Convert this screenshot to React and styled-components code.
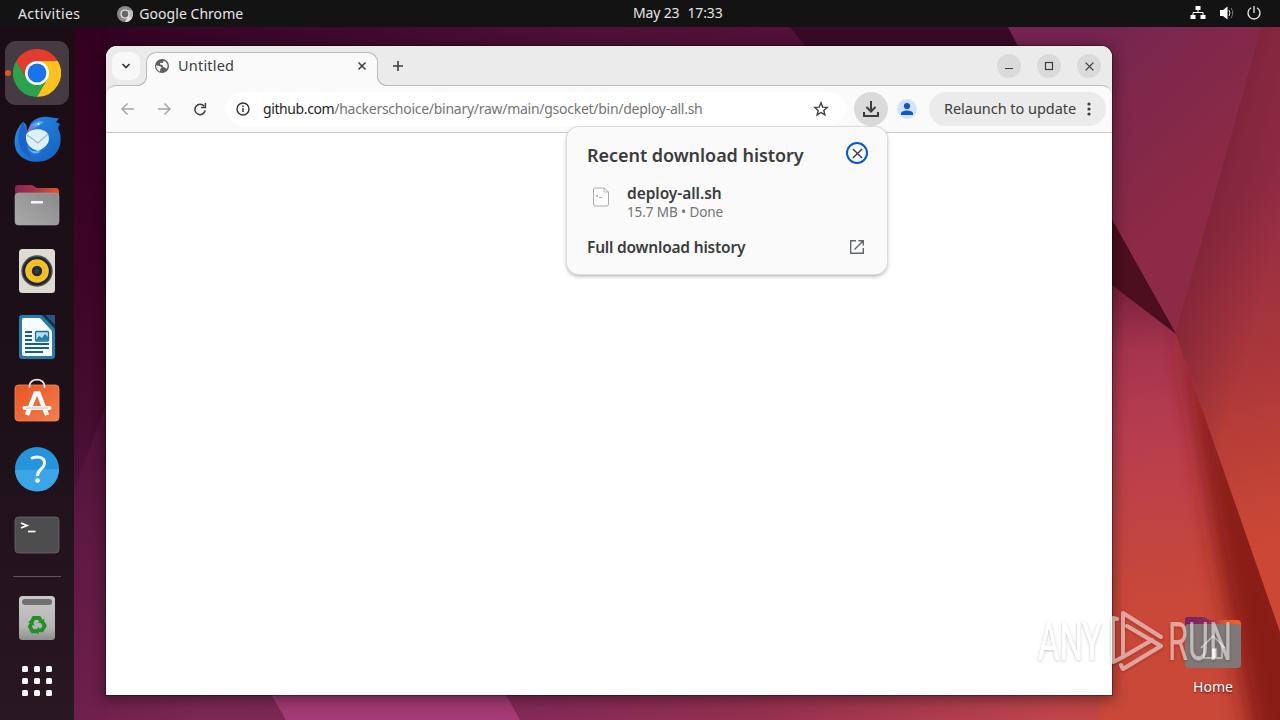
import React from 'react'
import styled, { createGlobalStyle } from 'styled-components'

const GlobalStyle = createGlobalStyle`
  * {
    box-sizing: border-box;
  }
  body {
    margin: 0;
    overflow: hidden;
    font-family: 'Noto Sans', 'Open Sans', sans-serif;
  }
  svg {
    display: block;
    flex: none;
  }
`

const Screen = styled.div`
  position: relative;
  display: flex;
  flex-direction: column;
  width: 1280px;
  height: 720px;
  overflow: hidden;
  background: #33001f;
`

const WallpaperLayer = styled.div`
  position: absolute;
  inset: 0;
`

const Label = styled.span`
  padding-bottom: ${props => props.$lift || 0}px;
  font-size: ${props => props.$size || 14}px;
  font-weight: ${props => props.$weight || 400};
  letter-spacing: ${props => props.$spacing || 0}px;
  color: ${props => props.$color || '#3c3c3c'};
  white-space: nowrap;
`

const TopBar = styled.header`
  position: relative;
  display: flex;
  align-items: center;
  height: 27px;
  padding: 0 18px;
  background: #131313;
`

const AppMenu = styled.div`
  display: flex;
  align-items: center;
  width: 615px;
`

const ChromeMenu = styled.div`
  display: flex;
  align-items: center;
  gap: 6px;
  margin-left: 37px;
`

const Clock = styled.div`
  display: flex;
  gap: 8px;
`

const StatusArea = styled.div`
  display: flex;
  align-items: center;
  gap: 12px;
  margin-left: auto;
`

const Workspace = styled.div`
  position: relative;
  display: flex;
  flex: 1;
`

const Dock = styled.nav`
  display: flex;
  flex-direction: column;
  align-items: center;
  width: 74px;
  padding-top: 14px;
  background: linear-gradient(#1a0d15, #1d1018 55%, #291722);
`

const DockSlot = styled.div`
  position: relative;
  display: flex;
  flex: none;
  align-items: center;
  justify-content: center;
  width: 64px;
  height: 64px;
  margin-bottom: 2px;
  border-radius: 11px;
  background: ${props => props.$active ? '#463b42' : 'transparent'};
`

const RunningDot = styled.i`
  position: absolute;
  left: 0;
  top: 29px;
  width: 6px;
  height: 6px;
  border-radius: 50%;
  background: #e95420;
`

const DockSeparator = styled.div`
  flex: none;
  width: 48px;
  height: 1px;
  margin: 7px 0 9px;
  background: #5f555b;
`

const AppGrid = styled.div`
  display: grid;
  grid-template-columns: repeat(3, 6px);
  grid-auto-rows: 6px;
  gap: 6px;
  margin-top: -7px;

  i {
    border-radius: 1.5px;
    background: #fff;
  }
`

const BrowserWindow = styled.section`
  position: absolute;
  left: 106px;
  top: 19px;
  display: flex;
  flex-direction: column;
  width: 1006px;
  height: 649px;
  border-radius: 11px 11px 0 0;
  background: #fff;
  box-shadow: 0 0 0 1px rgba(0, 0, 0, 0.3), 0 3px 14px 2px rgba(0, 0, 0, 0.4);
`

const TabStrip = styled.div`
  display: flex;
  align-items: flex-start;
  height: 49px;
  margin-bottom: -10px;
  padding: 6px 11px 0 6px;
  border-radius: 11px 11px 0 0;
  background: #ebebeb;
`

const TabSearch = styled.div`
  display: flex;
  align-items: center;
  justify-content: center;
  width: 28px;
  height: 28px;
  border-radius: 9px;
  background: #f8f8f8;
`

const Tab = styled.div`
  position: relative;
  z-index: 1;
  display: flex;
  align-items: center;
  width: 232px;
  height: 34px;
  margin-left: 6px;
  padding: 0 10px 7px 8px;
  border: 1px solid #b9b9b9;
  border-bottom: 0;
  border-radius: 10px 10px 0 0;
  background: #fafafa;

  &::before,
  &::after {
    content: '';
    position: absolute;
    bottom: 0;
    width: 10px;
    height: 10px;
  }
  &::before {
    left: -10px;
    background: radial-gradient(circle at 0 0, transparent 8.7px, #b9b9b9 9.2px 9.8px, #fafafa 10.3px);
  }
  &::after {
    right: -10px;
    background: radial-gradient(circle at 100% 0, transparent 8.7px, #b9b9b9 9.2px 9.8px, #fafafa 10.3px);
  }
`

const TabTitle = styled(Label)`
  flex: 1;
  margin-left: 9px;
`

const NewTab = styled.div`
  margin: 8px 0 0 14px;
`

const WindowControls = styled.div`
  display: flex;
  gap: 16px;
  margin: 2px 0 0 auto;
`

const WindowButton = styled.div`
  display: flex;
  align-items: center;
  justify-content: center;
  width: 24px;
  height: 24px;
  border-radius: 50%;
  background: #dadada;
`

const Toolbar = styled.div`
  display: flex;
  align-items: center;
  height: 48px;
  padding: 0 6px 0 14px;
  border-top: 1px solid #bcbcbc;
  border-bottom: 1px solid #c8c8c8;
  border-radius: 10px 10px 0 0;
  background: #fafafa;
`

const NavButtons = styled.div`
  display: flex;
  gap: 20px;
`

const AddressField = styled.div`
  display: flex;
  align-items: center;
  width: 620px;
  height: 34px;
  margin-left: 18px;
  padding: 0 17px 0 9px;
  border-radius: 17px;
  background: #fff;
`

const Address = styled(Label)`
  flex: 1;
  margin-left: 12px;

  b {
    font-weight: 400;
    letter-spacing: -0.4px;
    color: #1f1f1f;
  }
`

const DownloadButton = styled.div`
  display: flex;
  align-items: center;
  justify-content: center;
  width: 34px;
  height: 34px;
  margin-left: 8px;
  border-radius: 50%;
  background: #dadada;
`

const Profile = styled.div`
  display: flex;
  align-items: center;
  justify-content: center;
  width: 20px;
  height: 20px;
  margin-left: 9px;
  border-radius: 50%;
  background: #d3e3fd;
`

const RelaunchButton = styled.div`
  display: flex;
  align-items: center;
  justify-content: space-between;
  width: 177px;
  height: 34px;
  margin-left: auto;
  padding: 0 15px;
  border-radius: 17px;
  background: #ebebeb;
`

const DownloadBubble = styled.aside`
  position: absolute;
  left: 461px;
  top: 81px;
  width: 320px;
  height: 147px;
  padding: 13px 19px 0 20px;
  border-radius: 12px;
  background: #fafafa;
  box-shadow: 0 0 0 1px #dcdcdc, 0 2px 4px rgba(0, 0, 0, 0.35);
`

const BubbleRow = styled.div`
  display: flex;
  align-items: center;
  justify-content: space-between;
  height: ${props => props.$height}px;
  padding-right: ${props => props.$inset || 0}px;
`

const BubbleTitle = styled(Label)`
  padding-top: 3px;
`

const FileRow = styled.div`
  display: flex;
  align-items: flex-start;
  height: 58px;
  padding: 21px 0 0 4px;
`

const FileText = styled.div`
  display: flex;
  flex-direction: column;
  margin: -3px 0 0 16px;
  line-height: 19px;
`

const FocusRing = styled.div`
  display: flex;
  align-items: center;
  justify-content: center;
  width: 22px;
  height: 22px;
  border: 2px solid #0b57d0;
  border-radius: 50%;
`

const HomeShortcut = styled.div`
  position: absolute;
  left: 1173px;
  top: 588px;
  display: flex;
  flex-direction: column;
  align-items: center;
  gap: 8px;
  width: 80px;
  line-height: 20px;
  text-shadow: 0 1px 2px rgba(0, 0, 0, 0.7);
`

const Watermark = styled.div`
  position: absolute;
  left: 1030px;
  top: 600px;
`

const Wallpaper = () =>
  <svg width="1280" height="720" viewBox="0 0 1280 720">
    <defs>
      <linearGradient id="topShade" x1="0" x2="1" y1="0" y2="0">
        <stop offset="0" stopColor="#2f001f" />
        <stop offset="0.2" stopColor="#3a0728" />
        <stop offset="0.45" stopColor="#4e1035" />
        <stop offset="0.75" stopColor="#561239" />
        <stop offset="1" stopColor="#4b1031" />
      </linearGradient>
      <linearGradient id="bottomShade" x1="0" x2="1" y1="0" y2="0">
        <stop offset="0" stopColor="#651a45" />
        <stop offset="0.16" stopColor="#7b2853" />
        <stop offset="0.4" stopColor="#812957" />
        <stop offset="0.6" stopColor="#96304f" />
        <stop offset="0.82" stopColor="#bd444c" />
        <stop offset="0.92" stopColor="#c94838" />
        <stop offset="1" stopColor="#c94838" />
      </linearGradient>
      <linearGradient id="leftShade" x1="0" x2="0" y1="0" y2="1">
        <stop offset="0" stopColor="#32001f" />
        <stop offset="0.35" stopColor="#3b0425" />
        <stop offset="0.58" stopColor="#450d2e" />
        <stop offset="0.75" stopColor="#5a1840" />
        <stop offset="1" stopColor="#72214f" />
      </linearGradient>
      <linearGradient id="violet" gradientUnits="userSpaceOnUse" x1="1060" y1="60" x2="1190" y2="200">
        <stop offset="0" stopColor="#75244f" />
        <stop offset="0.35" stopColor="#7d274c" />
        <stop offset="1" stopColor="#8d2a45" />
      </linearGradient>
      <linearGradient id="ember" gradientUnits="userSpaceOnUse" x1="1200" y1="200" x2="1290" y2="540">
        <stop offset="0" stopColor="#932c46" />
        <stop offset="0.45" stopColor="#a8363b" />
        <stop offset="1" stopColor="#cd4834" />
      </linearGradient>
      <linearGradient id="emberEdge" gradientUnits="userSpaceOnUse" x1="1219" y1="180" x2="1290" y2="200">
        <stop offset="0" stopColor="#752034" stopOpacity="0.6" />
        <stop offset="1" stopColor="#752034" stopOpacity="0" />
      </linearGradient>
      <linearGradient id="rose" gradientUnits="userSpaceOnUse" x1="1120" y1="290" x2="1150" y2="600">
        <stop offset="0" stopColor="#7b223c" />
        <stop offset="0.2" stopColor="#a6344e" />
        <stop offset="0.5" stopColor="#b83e4e" />
        <stop offset="1" stopColor="#c94838" />
      </linearGradient>
      <linearGradient id="magenta" x1="0" x2="0" y1="0" y2="1">
        <stop offset="0" stopColor="#8f3060" />
        <stop offset="1" stopColor="#a63a76" />
      </linearGradient>
      <clipPath id="roseFacet">
        <path d="M1100 290 1176 334 1280 632V720H1100Z" />
      </clipPath>
      <filter id="soften" x="-50%" y="-20%" width="200%" height="140%">
        <feGaussianBlur stdDeviation="11" />
      </filter>
    </defs>
    <rect width="1280" height="400" fill="url(#topShade)" />
    <rect y="360" width="1280" height="360" fill="url(#bottomShade)" />
    <rect width="108" height="720" fill="url(#leftShade)" />
    <path d="M74 490 106 405V720H74Z" fill="#6a1f49" opacity="0.3" />
    <path d="M790 27H1008L1030 70H825Z" fill="#390a24" />
    <path d="M240 640 286 720H520L430 560Z" fill="url(#magenta)" />
    <path d="M1008 27H1262L1176 334 1112 220Z" fill="url(#violet)" />
    <path d="M1262 27H1280V632L1176 334Z" fill="url(#ember)" />
    <path d="M1262 27H1280V632L1176 334Z" fill="url(#emberEdge)" />
    <path d="M1100 198 1176 334 1100 276Z" fill="#4d0e20" />
    <path d="M1100 276 1176 334 1280 632V720H1100Z" fill="url(#rose)" />
    <g clipPath="url(#roseFacet)">
      <path d="M1176 310 1330 700 1330 760 1256 760 1218 560Z" fill="#8a1f16" filter="url(#soften)" />
    </g>
  </svg>

const ChromeIcon = () =>
  <svg width="48" height="48" viewBox="0 0 48 48">
    <path d="M24 12H44.8A24 24 0 0 0 3.2 12L13.6 30Z" fill="#e33b2e" />
    <path d="M13.6 30 3.2 12A24 24 0 0 0 24 48L34.4 30Z" fill="#2ba24c" />
    <path d="M34.4 30 24 48A24 24 0 0 0 44.8 12H24Z" fill="#fcc31e" />
    <circle cx="24" cy="24" r="12" fill="#fff" />
    <circle cx="24" cy="24" r="9.4" fill="#1a73e8" />
  </svg>

const ThunderbirdIcon = () =>
  <svg width="48" height="48" viewBox="0 0 48 48">
    <defs>
      <linearGradient id="bird" x1="0" y1="0" x2="1" y2="1">
        <stop offset="0" stopColor="#2b8cec" />
        <stop offset="1" stopColor="#1460bd" />
      </linearGradient>
    </defs>
    <path d="M16 13C18 5 26 1 35 2L46 3.500 43 7 47 9 45 13C50 23 48 35 39 42 28 50 11 48 4 37-1 27 2 15 10 7 13 8 14 12 14 16Z" fill="url(#bird)" />
    <path d="M10 7C5 16 4 24 7 32 9 37 14 41 19 43 13 34 13 26 14 16Z" fill="#1c63c7" />
    <path d="M16 13C20 7 27 5 31 7 28 10 22 12 16 16Z" fill="#58a9f6" />
    <path d="M15 15C17 11 20 10 22 11L16 17Z" fill="#9c6bb8" />
    <circle cx="25.500" cy="9" r="1.100" fill="#fff" />
    <path d="M13 20C16 13 31 12 35 19 38 26 34 32 25 36 18 34 12 29 13 20Z" fill="#dff0fd" />
    <path d="M14 20 25 28 35 19" fill="none" stroke="#95bed7" strokeWidth="1.300" />
    <path d="M14 31C17 36 22 37 28 36 24 40 18 40 14 31Z" fill="#69aff0" />
  </svg>

const FilesIcon = () =>
  <svg width="46" height="42" viewBox="0 0 46 42">
    <defs>
      <linearGradient id="folderBack" x1="0" x2="1">
        <stop offset="0" stopColor="#842653" />
        <stop offset="0.45" stopColor="#a3354d" />
        <stop offset="1" stopColor="#e95420" />
      </linearGradient>
      <linearGradient id="folderFront" x1="1" x2="0" y1="0" y2="1">
        <stop offset="0" stopColor="#8a8a8a" />
        <stop offset="1" stopColor="#aaa" />
      </linearGradient>
    </defs>
    <path d="M1 4Q1 1 4 1H18L23 4H42Q45 4 45 8V20H1Z" fill="url(#folderBack)" />
    <rect x="1" y="9" width="44" height="32" rx="3.500" fill="url(#folderFront)" stroke="#a7a7a7" strokeWidth="0.600" />
    <rect x="17" y="17" width="12" height="2.600" rx="0.500" fill="#f7f7f7" />
  </svg>

const RhythmboxIcon = () =>
  <svg width="38" height="46" viewBox="0 0 38 46">
    <rect x="1" y="1" width="36" height="44" rx="3.500" fill="#dfdbd2" />
    <circle cx="19" cy="23" r="15.700" fill="#4c515c" />
    <circle cx="19" cy="23" r="14.300" fill="#22252c" />
    <circle cx="19" cy="23" r="11.800" fill="#f3c22b" />
    <circle cx="19" cy="23" r="8" fill="none" stroke="#e3b020" strokeWidth="0.800" />
    <circle cx="19" cy="23" r="5.200" fill="#262a33" />
    <circle cx="19" cy="23" r="2.200" fill="#33405a" />
  </svg>

const WriterIcon = () =>
  <svg width="38" height="46" viewBox="0 0 38 46">
    <path d="M4 1H25L37 13V42Q37 45 34 45H4Q1 45 1 42V4Q1 1 4 1Z" fill="#267ca9" />
    <path d="M27 1H37V11Z" fill="#205a86" />
    <path d="M6 4H22L34 17V42H6Q4 42 4 40V6Q4 4 6 4Z" fill="#f5fbff" />
    <path d="M24 1H27L37 11V15Z" fill="#123047" />
    <path d="M7 18H14M7 22H14M7 26H14M7 30H31M7 34H31M7 38H25" stroke="#176087" strokeWidth="1.800" />
    <rect x="17.500" y="17.500" width="13" height="9.500" rx="1" fill="#b3def5" stroke="#196d99" strokeWidth="1.300" />
    <path d="M18 26 21 22 24 24 27 20 30 23V26Z" fill="#237faf" />
  </svg>

const SoftwareIcon = () =>
  <svg width="46" height="50" viewBox="0 0 46 50">
    <defs>
      <linearGradient id="bag" x1="0" y1="0" x2="1" y2="1">
        <stop offset="0" stopColor="#e95420" />
        <stop offset="1" stopColor="#f27f51" />
      </linearGradient>
    </defs>
    <rect x="1" y="7" width="44" height="36" rx="3.500" fill="url(#bag)" stroke="#f48a60" strokeWidth="0.800" />
    <path d="M15.500 10V8C15.500-.5 30.500-.5 30.500 8V10" fill="none" stroke="#ece6e2" strokeWidth="1.700" />
    <path d="M13 37 21.500 15.500H24.500L33 37" fill="none" stroke="#fff" strokeWidth="4.500" />
    <path d="M10.500 30H35.500" stroke="#fff" strokeWidth="4" strokeLinecap="round" />
    <path d="M12 30H34" stroke="#eb967b" strokeWidth="0.800" />
  </svg>

const HelpIcon = () =>
  <svg width="46" height="46" viewBox="0 0 46 46">
    <circle cx="23" cy="23" r="22" fill="#2494dd" />
    <path d="M1 24A22 22 0 0 0 45 23Z" fill="#3ba5e7" />
    <path d="M17 12.500C23 9.500 31 11 30.500 17.500 30 23 23.500 23 23.500 30" fill="none" stroke="#fff" strokeWidth="3" />
    <circle cx="23.500" cy="34.500" r="2.300" fill="#fff" />
  </svg>

const TerminalIcon = () =>
  <svg width="46" height="38" viewBox="0 0 46 38">
    <rect x="1" y="1" width="44" height="36" rx="3.500" fill="#4d4d4d" stroke="#6b6b6b" strokeWidth="0.800" />
    <path d="M7 7 13 9.500 7 12" fill="none" stroke="#fff" strokeWidth="1.800" />
    <path d="M14 15.500H21.500" stroke="#fff" strokeWidth="1.700" />
  </svg>

const TrashIcon = () =>
  <svg width="38" height="46" viewBox="0 0 38 46">
    <defs>
      <linearGradient id="bin" x1="0" x2="0" y1="0" y2="1">
        <stop offset="0" stopColor="#c9c9c9" />
        <stop offset="0.7" stopColor="#b5b5b5" />
        <stop offset="1" stopColor="#8e8e8e" />
      </linearGradient>
    </defs>
    <rect x="1" y="1" width="36" height="44" rx="3.500" fill="url(#bin)" />
    <rect x="4" y="4" width="30" height="6" rx="3" fill="#707070" />
    <g transform="translate(19 30)">
      {[0, 120, 240].map(angle =>
        <g key={angle} transform={`rotate(${angle})`}>
          <path d="M-5.200-3.500-3.200-7H2.200L3.800-4.200" fill="none" stroke="#218f28" strokeWidth="3.800" />
          <path d="M.6-2.600 6.600-1.200 7.400-6.200Z" fill="#218f28" />
        </g>
      )}
    </g>
  </svg>

const dockApps = [
  { name: 'Google Chrome', icon: <ChromeIcon />, active: true },
  { name: 'Thunderbird', icon: <ThunderbirdIcon /> },
  { name: 'Files', icon: <FilesIcon /> },
  { name: 'Rhythmbox', icon: <RhythmboxIcon /> },
  { name: 'Writer', icon: <WriterIcon /> },
  { name: 'Software', icon: <SoftwareIcon /> },
  { name: 'Help', icon: <HelpIcon /> },
  { name: 'Terminal', icon: <TerminalIcon /> },
]

const MenuChromeIcon = () =>
  <svg width="16" height="16" viewBox="0 0 16 16">
    <circle cx="8" cy="8" r="8" fill="#888" />
    <path d="M8 4H15A8 8 0 0 1 8 16L11.500 10Z" fill="#bcbcbc" />
    <path d="M8 16 11.500 10 15 12A8 8 0 0 1 8 16Z" fill="#dedede" />
    <circle cx="8" cy="8" r="4" fill="#666" stroke="#eee" strokeWidth="1.200" />
  </svg>

const NetworkIcon = () =>
  <svg width="16" height="16" viewBox="0 0 16 16">
    <path d="M5.500 0H10.500V4H5.500ZM0.500 9H5.500V13H.5ZM10.500 9H15.500V13H10.500Z" fill="#fff" />
    <path d="M8 4V6.500M3 9V6.500H13V9" fill="none" stroke="#fff" />
  </svg>

const VolumeIcon = () =>
  <svg width="16" height="18" viewBox="0 0 16 18">
    <path d="M2 5H5L9.500 1.500V14.500L5 11H2Z" fill="#fff" />
    <path d="M11 5Q13 8 11 11" fill="none" stroke="#ddd" />
    <path d="M13 3Q16.500 8 13 13" fill="none" stroke="#777" />
  </svg>

const PowerIcon = () =>
  <svg width="16" height="18" viewBox="0 0 16 18">
    <path d="M5 2.800A6 6 0 1 0 11 2.800M8 1V8" fill="none" stroke="#ececec" strokeWidth="1.300" />
  </svg>

const GlobeIcon = () =>
  <svg width="14" height="14" viewBox="0 0 14 14">
    <circle cx="7" cy="7" r="7" fill="#5a5d61" />
    <path d="M1.300 6.300 5 7.200C5.800 7.500 6.800 8 6.500 9L5.200 10V12.500C2.600 12 .9 9.500 1.300 6.300ZM8.500 1.700C11 2.300 12.600 4.500 12.600 7 12.500 8 12.300 9 11.600 10L10 8.500 8 8 7.500 6 5 5.500V4L8 3.800Z" fill="#f3f3f3" />
  </svg>

const CloseGlyph = ({ size = 10, width = 1.5, color = '#3c3c3c' }) =>
  <svg width={size} height={size} viewBox="0 0 10 10">
    <path d="M1.500 1.500 8.500 8.500M8.500 1.500 1.500 8.500" stroke={color} strokeWidth={width} />
  </svg>

const ArrowIcon = ({ flip }) =>
  <svg width="16" height="16" viewBox="0 0 16 16">
    <path d={flip ? 'M2 8H13.500M8.500 2.500 14 8 8.500 13.500' : 'M14 8H2.500M7.500 2.500 2 8 7.500 13.500'} fill="none" stroke="#a5a7a9" strokeWidth="1.500" />
  </svg>

const ReloadIcon = () =>
  <svg width="16" height="16" viewBox="0 0 16 16">
    <path d="M12.200 5.200A5.200 5.200 0 1 0 13.200 9.300" fill="none" stroke="#3f4144" strokeWidth="1.600" />
    <path d="M13.400 2V6.500H9" fill="none" stroke="#3f4144" strokeWidth="1.500" />
  </svg>

const InfoIcon = () =>
  <svg width="16" height="16" viewBox="0 0 16 16">
    <circle cx="8" cy="8" r="6" fill="none" stroke="#303134" strokeWidth="1.400" />
    <path d="M8 7.300V11M8 4.600V6.100" stroke="#303134" strokeWidth="1.500" />
  </svg>

const StarIcon = () =>
  <svg width="16" height="16" viewBox="0 0 16 16">
    <path d="M8 1.800 9.700 6.100 14.300 6.400 10.800 9.400 11.900 13.900 8 11.500 4.100 13.900 5.200 9.400 1.700 6.400 6.300 6.100Z" fill="none" stroke="#3f4144" strokeWidth="1.400" />
  </svg>

const DownloadIcon = () =>
  <svg width="18" height="18" viewBox="0 0 18 18">
    <path d="M9 1V11M4.500 7 9 11.500 13.500 7M2 12V16H16V12" fill="none" stroke="#3c3c3c" strokeWidth="2" />
  </svg>

const PersonIcon = () =>
  <svg width="14" height="14" viewBox="0 0 14 14">
    <circle cx="7" cy="4" r="3.100" fill="#0b57d0" />
    <path d="M1 13V11Q2 8.500 7 8.500T13 11V13Z" fill="#0b57d0" />
  </svg>

const ScriptFileIcon = () =>
  <svg width="20" height="20" viewBox="0 0 20 20">
    <path d="M2.500 2Q2.500 1 4 1H13L17.500 5V17Q17.500 19 16 19H4Q2.500 19 2.500 17Z" fill="#fcfcfc" stroke="#aaa" />
    <path d="M13 1V5H17.500" fill="none" stroke="#aaa" strokeWidth="0.800" />
    <path d="M5 8 7 9 5 10M8 10.500H11" fill="none" stroke="#a5a5a5" strokeWidth="0.900" />
  </svg>

const LaunchIcon = () =>
  <svg width="16" height="16" viewBox="0 0 16 16">
    <path d="M7 1.700H1.700V14.300H14.300V9M9.500 1.700H14.300V6.500M14 2 5.500 10.500" fill="none" stroke="#62666a" strokeWidth="1.400" />
  </svg>

const HomeFolderIcon = () =>
  <svg width="58" height="54" viewBox="0 0 58 54">
    <defs>
      <linearGradient id="homeBack" x1="0" x2="1">
        <stop offset="0" stopColor="#752268" />
        <stop offset="0.4" stopColor="#8e2b58" />
        <stop offset="0.7" stopColor="#df5330" />
        <stop offset="1" stopColor="#ef6428" />
      </linearGradient>
    </defs>
    <path d="M1 5Q1 2 4 2H20L26 5H53Q57 5 57 9V20H1Z" fill="url(#homeBack)" />
    <rect x="1" y="9" width="56" height="44" rx="4" fill="#7f7876" />
    <path d="M17 33 29 21 41 33M20 31V43H38V31M29 34H32V43H29Z" fill="none" stroke="#ccc" strokeWidth="1.400" />
    <rect x="28" y="34" width="4" height="9" fill="#eee" />
  </svg>

const AnyRunMark = () =>
  <svg width="250" height="80" viewBox="0 0 250 80">
    <defs>
      <filter id="markShadow" x="-10%" y="-10%" width="120%" height="130%">
        <feDropShadow dx="0" dy="1" stdDeviation="1.800" floodColor="#000" floodOpacity="0.5" />
      </filter>
    </defs>
    <g filter="url(#markShadow)" fill="#fff" opacity="0.5" fontFamily="Roboto, sans-serif" fontSize="53">
      <text x="8" y="60" textLength="64" lengthAdjust="spacingAndGlyphs">ANY</text>
      <text x="138" y="60" textLength="64" lengthAdjust="spacingAndGlyphs">RUN</text>
      <g fill="none" stroke="#fff" strokeWidth="4" strokeLinecap="round" strokeLinejoin="round">
        <path d="M131 37 93 13V57L122 40" />
        <path d="M97 26 131 46 93 69 91 65" />
        <path d="M87 19 83 18V62L93 57" />
      </g>
    </g>
  </svg>

const MinimizeGlyph = () =>
  <svg width="10" height="10" viewBox="0 0 10 10">
    <path d="M1 7.500H9" stroke="#3c3c3c" />
  </svg>

const MaximizeGlyph = () =>
  <svg width="10" height="10" viewBox="0 0 10 10">
    <rect x="1.500" y="1.500" width="7" height="7" fill="none" stroke="#3c3c3c" strokeWidth="1.200" />
  </svg>

const ChevronGlyph = () =>
  <svg width="10" height="8" viewBox="0 0 10 8">
    <path d="M1.500 2 5 5.500 8.500 2" fill="none" stroke="#333" strokeWidth="1.700" />
  </svg>

const PlusGlyph = () =>
  <svg width="12" height="12" viewBox="0 0 12 12">
    <path d="M6 1V11M1 6H11" stroke="#3c3c3c" strokeWidth="1.600" />
  </svg>

const DotsGlyph = () =>
  <svg width="4" height="16" viewBox="0 0 4 16">
    <g fill="#3c3c3c">
      <circle cx="2" cy="3" r="1.600" />
      <circle cx="2" cy="8" r="1.600" />
      <circle cx="2" cy="13" r="1.600" />
    </g>
  </svg>

const Downloads = () =>
  <DownloadBubble>
    <BubbleRow $height={26}>
      <BubbleTitle $size={18} $weight={600} $spacing={-0.05}>Recent download history</BubbleTitle>
      <FocusRing><CloseGlyph size={13} width={1.1} /></FocusRing>
    </BubbleRow>
    <FileRow>
      <ScriptFileIcon />
      <FileText>
        <Label $size={15.5} $weight={600} $spacing={-0.05}>deploy-all.sh</Label>
        <Label $size={13.5} $spacing={-0.1} $color="#747474">15.7 MB • Done</Label>
      </FileText>
    </FileRow>
    <BubbleRow $height={46} $inset={3}>
      <Label $size={15.5} $weight={600} $spacing={-0.2}>Full download history</Label>
      <LaunchIcon />
    </BubbleRow>
  </DownloadBubble>

const Browser = () =>
  <BrowserWindow>
    <TabStrip>
      <TabSearch><ChevronGlyph /></TabSearch>
      <Tab>
        <GlobeIcon />
        <TabTitle $size={14.5} $spacing={0.2} $lift={3}>Untitled</TabTitle>
        <CloseGlyph />
      </Tab>
      <NewTab><PlusGlyph /></NewTab>
      <WindowControls>
        <WindowButton><MinimizeGlyph /></WindowButton>
        <WindowButton><MaximizeGlyph /></WindowButton>
        <WindowButton><CloseGlyph size={11} width={1.2} /></WindowButton>
      </WindowControls>
    </TabStrip>
    <Toolbar>
      <NavButtons>
        <ArrowIcon />
        <ArrowIcon flip />
        <ReloadIcon />
      </NavButtons>
      <AddressField>
        <InfoIcon />
        <Address $spacing={-0.27} $lift={2} $color="#757575"><b>github.com</b>/hackerschoice/binary/raw/main/gsocket/bin/deploy-all.sh</Address>
        <StarIcon />
      </AddressField>
      <DownloadButton><DownloadIcon /></DownloadButton>
      <Profile><PersonIcon /></Profile>
      <RelaunchButton>
        <Label $size={14.5} $spacing={-0.04} $lift={2}>Relaunch to update</Label>
        <DotsGlyph />
      </RelaunchButton>
    </Toolbar>
    <Downloads />
  </BrowserWindow>

const App = () =>
  <Screen>
    <GlobalStyle />
    <WallpaperLayer><Wallpaper /></WallpaperLayer>
    <TopBar>
      <AppMenu>
        <Label $spacing={0.4} $color="#e6e6e6">Activities</Label>
        <ChromeMenu>
          <MenuChromeIcon />
          <Label $spacing={0.04} $color="#e6e6e6">Google Chrome</Label>
        </ChromeMenu>
      </AppMenu>
      <Clock>
        <Label $spacing={-0.15} $lift={2} $color="#e6e6e6">May 23</Label>
        <Label $spacing={-0.15} $lift={2} $color="#e6e6e6">17:33</Label>
      </Clock>
      <StatusArea>
        <NetworkIcon />
        <VolumeIcon />
        <PowerIcon />
      </StatusArea>
    </TopBar>
    <Workspace>
      <Dock>
        {dockApps.map(app =>
          <DockSlot key={app.name} $active={app.active}>
            {app.active && <RunningDot />}
            {app.icon}
          </DockSlot>
        )}
        <DockSeparator />
        <DockSlot><TrashIcon /></DockSlot>
        <DockSlot>
          <AppGrid>{Array.from({ length: 9 }, (_, i) => <i key={i} />)}</AppGrid>
        </DockSlot>
      </Dock>
      <Browser />
      <HomeShortcut>
        <HomeFolderIcon />
        <Label $color="#fff">Home</Label>
      </HomeShortcut>
    </Workspace>
    <Watermark><AnyRunMark /></Watermark>
  </Screen>

export default App
